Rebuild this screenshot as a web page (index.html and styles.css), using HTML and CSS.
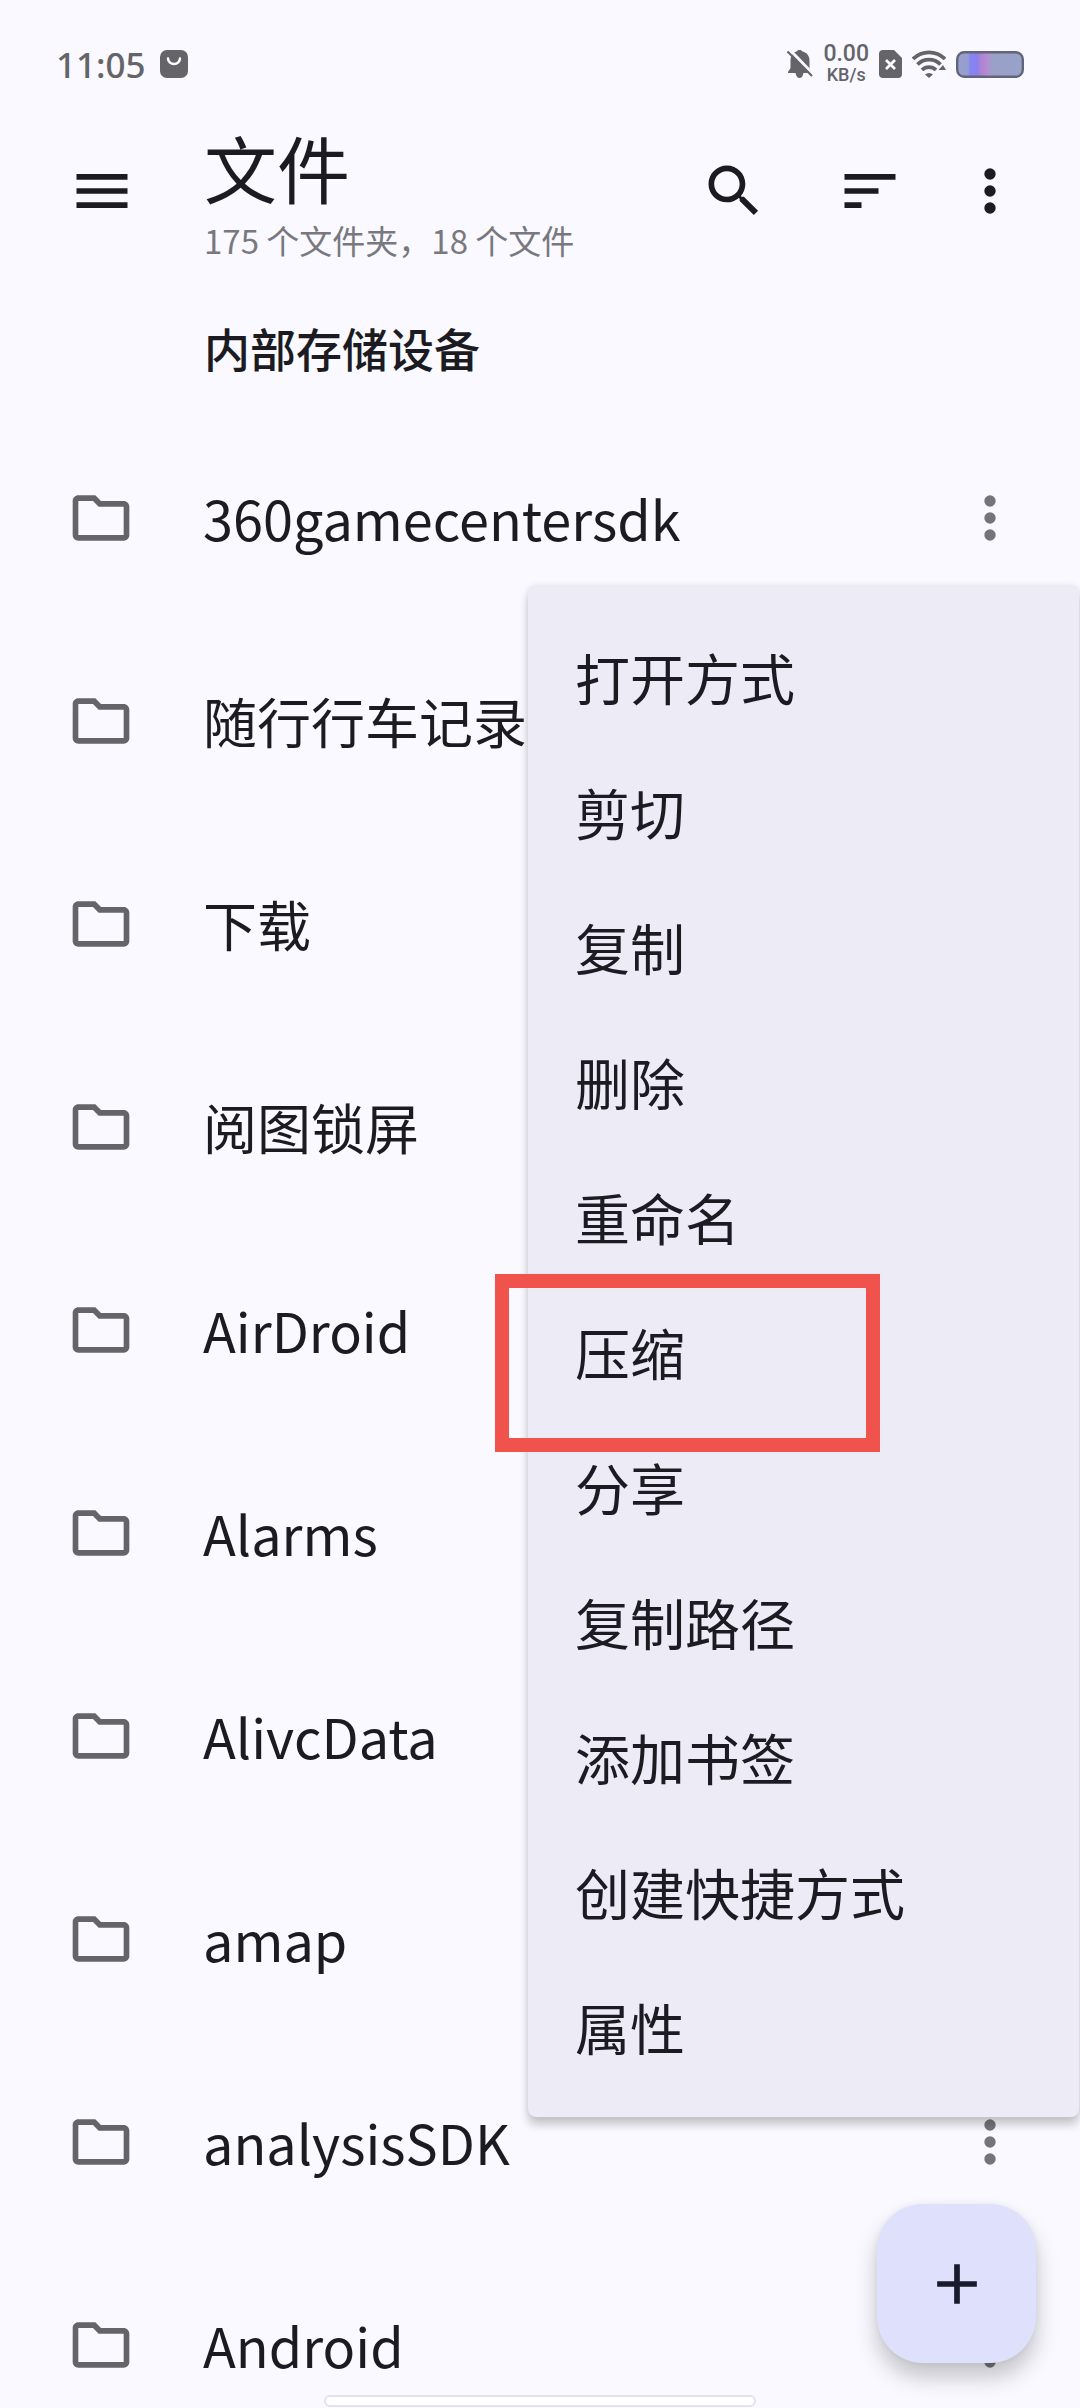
FILE: index.html
```html
<!DOCTYPE html>
<html lang="zh-CN">
<head>
  <meta charset="UTF-8">
  <meta name="viewport" content="width=device-width, initial-scale=1.0">
  <title>文件</title>
  <link rel="stylesheet" href="styles.css">
</head>
<body>
  <!-- Shared icons -->
  <svg class="sprite" aria-hidden="true">
    <symbol id="folder" viewBox="0 0 24 24"><path d="M9.17 6l2 2H20v10H4V6h5.17M10 4H4c-1.1 0-1.99.9-1.99 2L2 18c0 1.1.9 2 2 2h16c1.1 0 2-.9 2-2V8c0-1.1-.9-2-2-2h-8l-2-2z"/></symbol>
    <symbol id="more" viewBox="0 0 24 24"><circle cx="12" cy="6" r="2"/><circle cx="12" cy="12" r="2"/><circle cx="12" cy="18" r="2"/></symbol>
  </svg>

  <div class="screen">
    <div class="status">
      <span class="clock">11:05</span>
      <svg width="28" height="28" viewBox="0 0 28 28">
        <rect width="28" height="28" rx="7" fill="#646469"/>
        <path d="M8 8.500a6 5.500 0 0 0 12 0" fill="none" stroke="#fff" stroke-width="2.500" stroke-linecap="round"/>
      </svg>
      <div class="status-right">
        <svg width="26" height="28" viewBox="0 0 26 28">
          <path d="M12.500 0c1.500 0 2.500.7 3 1.500 4.500 1 7 4.500 7 9v7.500l2 4v1h-8c-.5 3-2 5-4 5s-3.500-2-4-5H1v-1l2.500-4v-7.500c0-4.500 2-8 6-9 .5-.8 1.500-1.500 3-1.500z"/>
          <path d="M2-1l24 25" stroke="#f9f9ff" stroke-width="3"/>
          <path d="M.5 1.500l24.500 24.500" stroke="#646469" stroke-width="2.200"/>
        </svg>
        <div class="speed">
          <span class="speed-value">0.00</span>
          <span class="speed-unit">KB/s</span>
        </div>
        <svg width="23" height="28" viewBox="0 0 23 28">
          <path d="M4 0h11l8 8v16a4 4 0 0 1-4 4H4a4 4 0 0 1-4-4V4a4 4 0 0 1 4-4z"/>
          <path d="M7 10l9 9M16 10l-9 9" stroke="#f9f9ff" stroke-width="2.800"/>
        </svg>
        <svg width="34" height="28" viewBox="0 0 34 28">
          <g fill="none" stroke="#646469" stroke-width="3.800">
            <path d="M1 9a22.500 22.500 0 0 1 32 0"/>
            <path d="M5.500 14.500a16 16 0 0 1 23 0"/>
            <path d="M10 20a10 10 0 0 1 14 0"/>
          </g>
          <path d="M13 24.500a6 6 0 0 1 8 0l-4 3.500zM26.500 20l4.500-5 3 5z"/>
        </svg>
        <svg width="68" height="27" viewBox="0 0 68 27">
          <defs>
            <linearGradient id="charge">
              <stop offset="0" stop-color="#99a2c8"/>
              <stop offset=".16" stop-color="#969dd0"/>
              <stop offset=".2" stop-color="#8585f5"/>
              <stop offset=".31" stop-color="#8a80ec"/>
              <stop offset=".35" stop-color="#a982d4"/>
              <stop offset=".47" stop-color="#b98cd2"/>
              <stop offset=".52" stop-color="#99a0c8"/>
              <stop offset="1" stop-color="#99a2c8"/>
            </linearGradient>
          </defs>
          <rect x="1.200" y="1.200" width="65.600" height="24.600" rx="7" fill="url(#charge)" stroke="#626479" stroke-width="2.400"/>
        </svg>
      </div>
    </div>

    <header class="toolbar">
      <button class="icon-btn" aria-label="菜单">
        <svg class="icon" viewBox="0 0 24 24"><path d="M3 18h18v-2H3v2zm0-5h18v-2H3v2zm0-7v2h18V6H3z"/></svg>
      </button>
      <div class="titles">
        <h1>文件</h1>
        <p>175 个文件夹，18 个文件</p>
      </div>
      <div class="actions">
        <button class="icon-btn" aria-label="搜索">
          <svg class="icon" viewBox="0 0 24 24"><path d="M15.500 14h-.79l-.28-.27C15.410 12.590 16 11.110 16 9.500 16 5.910 13.090 3 9.500 3S3 5.910 3 9.500 5.910 16 9.500 16c1.610 0 3.090-.59 4.230-1.570l.27.28v.79l5 4.990L20.490 19l-4.990-5zm-6 0C7.010 14 5 11.990 5 9.500S7.010 5 9.500 5 14 7.010 14 9.500 11.990 14 9.500 14z"/></svg>
        </button>
        <button class="icon-btn" aria-label="排序">
          <svg class="icon" viewBox="0 0 24 24"><path d="M3 18h6v-2H3v2zM3 6v2h18V6H3zm0 7h12v-2H3v2z"/></svg>
        </button>
        <button class="icon-btn more" aria-label="更多选项"><svg class="icon"><use href="#more"/></svg></button>
      </div>
    </header>

    <nav class="breadcrumb"><a href="#">内部存储设备</a></nav>

    <ul class="files">
      <li class="file">
        <svg class="icon"><use href="#folder"/></svg>
        <span class="name">360gamecentersdk</span>
        <button class="icon-btn more" aria-label="更多"><svg class="icon"><use href="#more"/></svg></button>

        <div class="menu" role="menu">
          <button role="menuitem">打开方式</button>
          <button role="menuitem">剪切</button>
          <button role="menuitem">复制</button>
          <button role="menuitem">删除</button>
          <button role="menuitem">重命名</button>
          <button role="menuitem" class="marked">压缩</button>
          <button role="menuitem">分享</button>
          <button role="menuitem">复制路径</button>
          <button role="menuitem">添加书签</button>
          <button role="menuitem">创建快捷方式</button>
          <button role="menuitem">属性</button>
        </div>
      </li>
      <li class="file">
        <svg class="icon"><use href="#folder"/></svg>
        <span class="name">随行行车记录</span>
        <button class="icon-btn more" aria-label="更多"><svg class="icon"><use href="#more"/></svg></button>
      </li>
      <li class="file">
        <svg class="icon"><use href="#folder"/></svg>
        <span class="name">下载</span>
        <button class="icon-btn more" aria-label="更多"><svg class="icon"><use href="#more"/></svg></button>
      </li>
      <li class="file">
        <svg class="icon"><use href="#folder"/></svg>
        <span class="name">阅图锁屏</span>
        <button class="icon-btn more" aria-label="更多"><svg class="icon"><use href="#more"/></svg></button>
      </li>
      <li class="file">
        <svg class="icon"><use href="#folder"/></svg>
        <span class="name">AirDroid</span>
        <button class="icon-btn more" aria-label="更多"><svg class="icon"><use href="#more"/></svg></button>
      </li>
      <li class="file">
        <svg class="icon"><use href="#folder"/></svg>
        <span class="name">Alarms</span>
        <button class="icon-btn more" aria-label="更多"><svg class="icon"><use href="#more"/></svg></button>
      </li>
      <li class="file">
        <svg class="icon"><use href="#folder"/></svg>
        <span class="name">AlivcData</span>
        <button class="icon-btn more" aria-label="更多"><svg class="icon"><use href="#more"/></svg></button>
      </li>
      <li class="file">
        <svg class="icon"><use href="#folder"/></svg>
        <span class="name">amap</span>
        <button class="icon-btn more" aria-label="更多"><svg class="icon"><use href="#more"/></svg></button>
      </li>
      <li class="file">
        <svg class="icon"><use href="#folder"/></svg>
        <span class="name">analysisSDK</span>
        <button class="icon-btn more" aria-label="更多"><svg class="icon"><use href="#more"/></svg></button>
      </li>
      <li class="file">
        <svg class="icon"><use href="#folder"/></svg>
        <span class="name">Android</span>
        <button class="icon-btn more" aria-label="更多"><svg class="icon"><use href="#more"/></svg></button>
      </li>
    </ul>

    <button class="fab" aria-label="新建">
      <svg class="icon" viewBox="0 0 24 24"><path d="M19 13h-6v6h-2v-6H5v-2h6V5h2v6h6v2z"/></svg>
    </button>
    <div class="home-bar"></div>
  </div>
</body>
</html>
```

FILE: styles.css
```css
*,
*::after {
  box-sizing: border-box;
}

body {
  margin: 0;
  background: #f9f9ff;
  color: #1b1b21;
  font-family: "Noto Sans", "Noto Sans CJK SC", sans-serif;
}

button {
  padding: 0;
  border: none;
  background: none;
  color: inherit;
  font-family: inherit;
  cursor: pointer;
}

svg {
  display: block;
  flex-shrink: 0;
  fill: currentColor;
}

.sprite {
  position: absolute;
  width: 0;
  height: 0;
}

.screen {
  position: relative;
  height: 100vh;
  overflow: hidden;
}

.icon {
  width: 68px;
  height: 68px;
}

.icon-btn {
  flex-shrink: 0;
}

/* Status bar */
.status {
  display: flex;
  align-items: center;
  gap: 14px;
  height: 128px;
  padding: 0 56px;
  color: #646469;
}

.clock {
  font-size: 35px;
  font-weight: 500;
}

.status-right {
  display: flex;
  align-items: center;
  gap: 10px;
  margin-left: auto;
}

.speed {
  display: flex;
  flex-direction: column;
  align-items: center;
  font-family: Roboto, sans-serif;
  font-weight: 500;
}

.speed-value {
  font-size: 23px;
  line-height: 22px;
}

.speed-unit {
  font-size: 18px;
  line-height: 20px;
}

/* Toolbar */
.toolbar {
  display: flex;
  align-items: center;
  height: 126px;
  padding: 0 56px 0 68px;
}

.titles {
  flex: 1;
  padding: 10px 0 0 68px;
}

.titles h1 {
  margin: 0;
  font-size: 73px;
  font-weight: 400;
  line-height: 88px;
}

.titles p {
  margin: 0;
  color: #78787e;
  font-family: "Noto Sans CJK SC", sans-serif;
  font-size: 33px;
  line-height: 52px;
  white-space: nowrap;
}

.actions {
  display: flex;
  gap: 68px;
}

.actions .more {
  margin-left: -16px;
}

/* Current folder */
.breadcrumb {
  height: 162px;
  padding: 62px 0 0 204px;
  font-size: 46px;
  font-weight: 500;
  line-height: 66px;
}

.breadcrumb a {
  color: inherit;
  text-decoration: none;
}

/* File list */
.files {
  margin: 0;
  padding: 0;
  list-style: none;
}

.file {
  position: relative;
  display: flex;
  align-items: center;
  height: 203px;
  padding: 0 56px 0 67px;
  color: #646469;
}

.name {
  flex: 1;
  padding-left: 68px;
  color: #1b1b21;
  font-family: "Noto Sans CJK SC", sans-serif;
  font-size: 54px;
  line-height: 76px;
  white-space: nowrap;
}

.file .more {
  color: #74747a;
}

/* Popup menu of the first file */
.menu {
  position: absolute;
  z-index: 2;
  top: 169px;
  right: 1px;
  display: flex;
  flex-direction: column;
  width: 551px;
  padding: 23px 0 24px;
  border-radius: 8px;
  background: #ecebf6;
  box-shadow: 0 8px 10px rgba(0, 0, 0, 0.2), 0 0 6px rgba(0, 0, 0, 0.08);
  color: #1b1b21;
}

.menu button {
  position: relative;
  height: 135px;
  padding-left: 47px;
  font-size: 55px;
  text-align: left;
}

/* Highlight frame */
.marked::after {
  content: "";
  position: absolute;
  top: -9px;
  left: -33px;
  width: 385px;
  height: 178px;
  border: 14px solid #ef534b;
}

.fab {
  position: absolute;
  right: 44px;
  bottom: 45px;
  display: flex;
  align-items: center;
  justify-content: center;
  width: 159px;
  height: 159px;
  border-radius: 46px;
  background: #dfe0fb;
  box-shadow: 0 14px 22px rgba(0, 0, 0, 0.22), 0 0 6px rgba(0, 0, 0, 0.06);
  color: #191a2c;
}

.home-bar {
  position: absolute;
  right: 30%;
  bottom: 1px;
  left: 30%;
  height: 12px;
  border: 2px solid #e3e3e9;
  border-radius: 6px;
  background: #fff;
}
```
